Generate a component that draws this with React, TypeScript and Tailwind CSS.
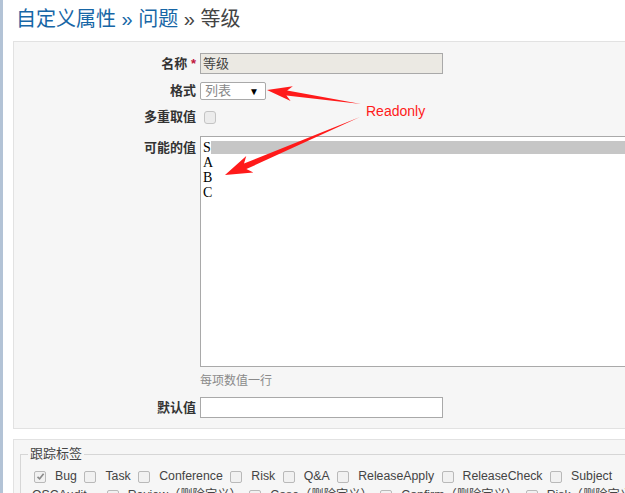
import React from 'react';

type Pt = [number, number];

// tapered arrow polygon, from a thin tail to a barbed head
function arrowPoints(tail: Pt, tip: Pt, headLen: number, headW: number, shaftW: number) {
  const [tx, ty] = tail;
  const [hx, hy] = tip;
  const len = Math.hypot(hx - tx, hy - ty);
  const ux = (hx - tx) / len;
  const uy = (hy - ty) / len;
  const px = -uy;
  const py = ux;
  const bx = hx - ux * headLen;
  const by = hy - uy * headLen;
  const barb = 5;
  const pts: Pt[] = [
    [tx, ty],
    [bx + (px * shaftW) / 2, by + (py * shaftW) / 2],
    [bx - ux * barb + (px * headW) / 2, by - uy * barb + (py * headW) / 2],
    [hx, hy],
    [bx - ux * barb - (px * headW) / 2, by - uy * barb - (py * headW) / 2],
    [bx - (px * shaftW) / 2, by - (py * shaftW) / 2],
  ];
  return pts.map((p) => p.join(',')).join(' ');
}

function Box({ checked = false }: { checked?: boolean }) {
  return (
    <span className="relative inline-flex h-[12px] w-[12px] shrink-0 items-center justify-center rounded-[2px] border border-[#b9b9b9] bg-[#f1f1f1]">
      {checked && (
        <svg width="9" height="9" viewBox="0 0 9 9">
          <path d="M1.5 4.8 L3.6 6.8 L7.6 1.8" fill="none" stroke="#8a8a8a" strokeWidth="1.6" />
        </svg>
      )}
    </span>
  );
}

const trackers = ['Task', 'Conference', 'Risk', 'Q&A', 'ReleaseApply', 'ReleaseCheck', 'Subject'];
const removed = ['Review', 'Case', 'Confirm', 'Risk'];

function Label({ children }: { children: React.ReactNode }) {
  return <div className="w-[182px] shrink-0 text-right text-[13px] font-bold text-[#333]">{children}</div>;
}

export default function App() {
  return (
    <div className="relative h-[493px] overflow-hidden border-l-[3px] border-[#b3c3d6] bg-white pl-[10px] pt-[5px] font-['Liberation_Sans','Noto_Sans_CJK_SC',sans-serif]">
      <h2 className="h-[28px] whitespace-nowrap pl-[3px] text-[20px] leading-[28px] font-['Liberation_Sans','Noto_Sans_CJK_SC',sans-serif]">
        <span className="text-[#1766a6]">自定义属性</span>
        <span className="text-[#1766a6]"> » </span>
        <span className="text-[#1766a6]">问题</span>
        <span className="text-[#444]"> » 等级</span>
      </h2>

      <div className="mt-[8px] w-[640px] border border-[#e2e2e2] bg-[#f6f6f6] pb-[10px] pt-[11px]">
        <div className="flex h-[21px] items-center">
          <Label>
            名称 <span className="text-[#c0143c]">*</span>
          </Label>
          <div className="ml-[4px] flex h-[21px] w-[243px] items-center border border-[#a9a9a9] bg-[#ebe9e3] pl-[2px] text-[13px] text-[#444]">
            等级
          </div>
        </div>

        <div className="mt-[8px] flex h-[18px] items-center">
          <Label>格式</Label>
          <div className="ml-[4px] flex h-[18px] w-[66px] items-center justify-between rounded-[2px] border border-[#a9a9a9] bg-white pl-[4px] pr-[6px] text-[13px] text-[#888]">
            <span>列表</span>
            <span className="text-[10px] text-black">▼</span>
          </div>
        </div>

        <div className="mt-[9px] flex h-[16px] items-center">
          <Label>多重取值</Label>
          <div className="ml-[8px] flex">
            <span className="h-[13px] w-[12px] rounded-[3px] border border-[#c4c4c4] bg-[#ececec]" />
          </div>
        </div>

        <div className="mt-[11px] flex">
          <div className="pt-[2px]">
            <Label>可能的值</Label>
          </div>
          <div className="ml-[4px] h-[231px] flex-1 border border-[#a9a9a9] bg-white pl-[2px] pt-[3px] text-[14px] leading-[15px] text-black font-['Liberation_Serif',serif]">
            <div className="flex items-center">
              <span>S</span>
              <span className="h-[13px] flex-1 bg-[#c6c6c6]" />
            </div>
            <div>A</div>
            <div>B</div>
            <div>C</div>
          </div>
        </div>

        <div className="mt-[5px] flex h-[18px] items-center">
          <div className="w-[182px]" />
          <span className="ml-[4px] text-[12px] text-[#8a8a8a]">每项数值一行</span>
        </div>

        <div className="mt-[7px] flex h-[21px] items-center">
          <Label>默认值</Label>
          <div className="ml-[4px] h-[21px] w-[243px] border border-[#a9a9a9] bg-white" />
        </div>
      </div>

      <div className="mt-[10px] h-[80px] w-[640px] border border-[#e2e2e2] bg-[#f6f6f6] pl-[6px] pt-[7px]">
        <fieldset className="h-[70px] border border-[#d6d6d6] pl-[7px]">
          <legend className="px-[2px] text-[13px] leading-[14px] text-[#444]">跟踪标签</legend>
          <div className="mt-[7px] flex h-[17px] items-center whitespace-nowrap pl-[6px] text-[12.3px] text-[#444]">
            <Box checked />
            <span className="ml-[9px] mr-[7.5px]">Bug</span>
            {trackers.map((t) => (
              <React.Fragment key={t}>
                <Box />
                <span className="ml-[9px] mr-[7.5px]">{t}</span>
              </React.Fragment>
            ))}
          </div>
          <div className="mt-[2px] flex h-[17px] items-center whitespace-nowrap pl-[4px] text-[12.3px] text-[#444]">
            <span className="mr-[20px]">OSCAudit</span>
            {removed.map((t) => (
              <React.Fragment key={t}>
                <Box />
                <span className="ml-[9px] mr-[7.5px]">{t}（删除定义）</span>
              </React.Fragment>
            ))}
          </div>
        </fieldset>
      </div>

      <svg className="pointer-events-none absolute left-0 top-0" width="625" height="493">
        <polygon points={arrowPoints([358, 104], [264, 90], 20, 15, 5)} fill="#ff1a1a" />
        <polygon points={arrowPoints([357, 117], [222, 175], 22, 18, 6)} fill="#ff1a1a" />
      </svg>
      <span className="pointer-events-none absolute left-[363px] top-[103px] text-[14px] leading-[17px] text-[#ff1a1a]">
        Readonly
      </span>
    </div>
  );
}
